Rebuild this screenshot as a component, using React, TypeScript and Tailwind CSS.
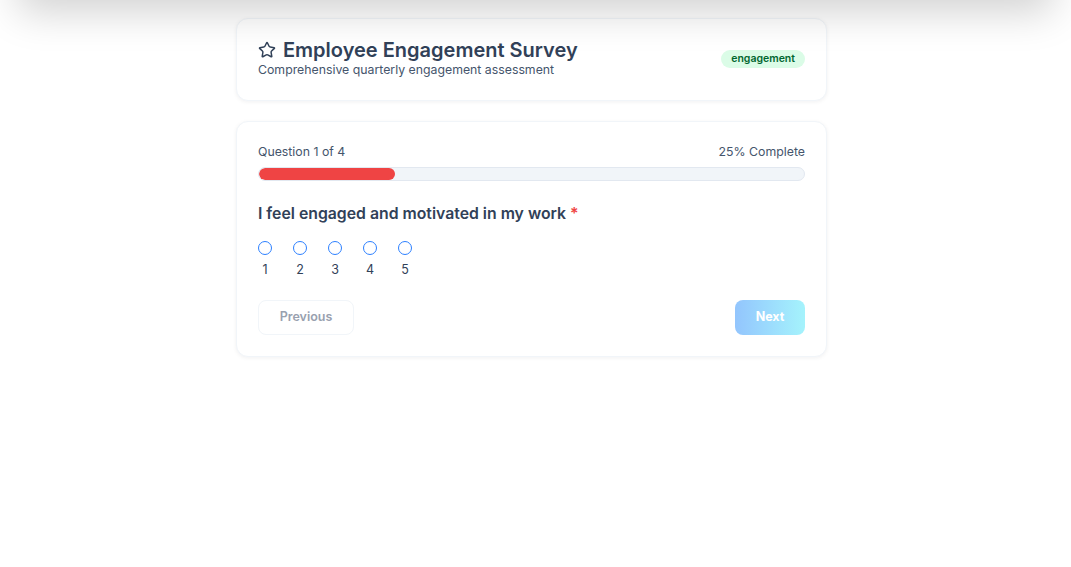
import { Star } from 'lucide-react'

const SCALE = [1, 2, 3, 4, 5]

export default function App() {
  return (
    <div className="relative min-h-[567px] overflow-hidden bg-white font-['Inter',sans-serif] text-slate-700">
      {/* shadow from header sitting just above the viewport */}
      <div className="absolute -top-[40px] left-[30px] h-[40px] w-[1011px] bg-white shadow-[0_0_40px_12px_rgba(0,0,0,0.18)]" />

      <div className="ml-[236px] flex w-[591px] flex-col gap-[20px] pt-[18px]">
        <div className="flex items-start justify-between rounded-xl border border-slate-100 bg-white px-[21px] pb-[22px] pt-[19px] shadow-[0_1px_4px_rgba(15,23,42,0.06)]">
          <div>
            <h1 className="flex items-center gap-[7px] text-[20px] font-semibold leading-[24px] text-slate-700">
              <Star className="h-[18px] w-[18px]" strokeWidth={2} />
              Employee Engagement Survey
            </h1>
            <p className="text-[12.3px] leading-[16px] text-slate-600">
              Comprehensive quarterly engagement assessment
            </p>
          </div>
          <span className="mt-[12px] rounded-full bg-green-100 px-[10px] py-[2px] text-[10.5px] font-semibold leading-[14px] text-green-800">
            engagement
          </span>
        </div>

        <div className="rounded-xl border border-slate-100 bg-white px-[21px] pb-[21px] pt-[21px] shadow-[0_1px_4px_rgba(15,23,42,0.06)]">
          <div className="flex items-center justify-between text-[12.3px] leading-[18px] text-slate-600">
            <span>Question 1 of 4</span>
            <span>25% Complete</span>
          </div>
          <div className="mt-[6px] h-[14px] overflow-hidden rounded-full border border-slate-200 bg-slate-100">
            <div className="h-full w-1/4 rounded-full bg-[#ef4444]" />
          </div>

          <h2 className="mt-[22px] text-[15.8px] font-semibold leading-[22px] text-slate-700">
            I feel engaged and motivated in my work <span className="text-[#ef4444]">*</span>
          </h2>

          <div className="mt-[16px] flex gap-[21px]">
            {SCALE.map((n) => (
              <label key={n} className="flex w-[14px] flex-col items-center gap-[7px]">
                <span className="h-[14px] w-[14px] rounded-full border border-blue-500 bg-white" />
                <span className="text-[12.5px] leading-[16px] text-slate-700">{n}</span>
              </label>
            ))}
          </div>

          <div className="mt-[22px] flex items-center justify-between">
            <button className="h-[35px] w-[96px] rounded-lg border border-slate-100 bg-white text-[12.5px] font-semibold text-gray-400">
              Previous
            </button>
            <button className="h-[35px] w-[70px] rounded-lg bg-gradient-to-r from-[#93c5fd] to-[#a5f3fc] text-[12.5px] font-bold text-white">
              Next
            </button>
          </div>
        </div>
      </div>
    </div>
  )
}
